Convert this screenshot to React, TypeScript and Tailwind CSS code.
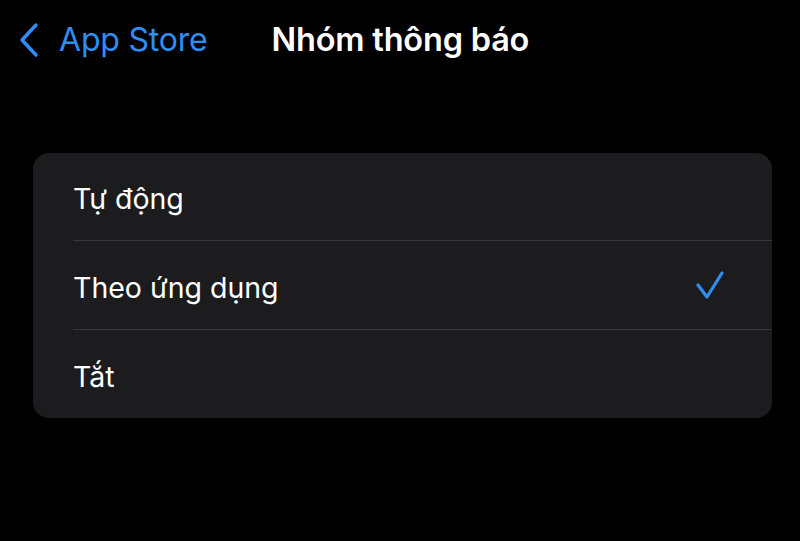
import React, { useState } from 'react'

const options = ['Tự động', 'Theo ứng dụng', 'Tắt']

export default function App(){
  const [selected, setSelected] = useState('Theo ứng dụng')

  return (
    <div className="w-[800px] h-[541px] bg-black text-white overflow-hidden" style={{fontFamily: 'Inter, "Noto Sans", sans-serif'}}>
      {/* nav bar */}
      <div className="h-[80px] flex items-center pl-[18px]">
        <button className="flex items-center text-[#2f8ef4]">
          <svg width="22" height="36" viewBox="0 0 22 36" fill="none" stroke="currentColor" strokeWidth="3.5" strokeLinecap="round" strokeLinejoin="round">
            <path d="M18 3 L4 18 L18 33" />
          </svg>
          <span className="ml-[19px] text-[32px] tracking-[-0.2px]">App Store</span>
        </button>
        <h1 className="ml-[64px] text-[32.5px] font-semibold tracking-[-0.2px]">Nhóm thông báo</h1>
      </div>

      <div className="pt-[73px] pl-[33px] pr-[28px]">
        <div className="bg-[#1c1c1e] rounded-[16px] overflow-hidden">
          {options.map((opt, idx) => (
            <button key={opt} onClick={()=>setSelected(opt)} className="w-full flex items-stretch pl-[40px] text-left">
              <div className={`flex-1 flex items-center pr-[48px] ${idx > 0 ? 'h-[89px] border-t border-[#38383a]' : 'h-[87px]'}`}>
                <span className="flex-1 text-[28.5px] pt-[6px]">{opt}</span>
                {selected === opt && (
                  <svg width="28" height="28" viewBox="0 0 28 28" fill="none" stroke="#2f8ef4" strokeWidth="3.2" strokeLinecap="round" strokeLinejoin="round">
                    <path d="M2 14 L11 26 L26 2" />
                  </svg>
                )}
              </div>
            </button>
          ))}
        </div>
      </div>
    </div>
  )
}
